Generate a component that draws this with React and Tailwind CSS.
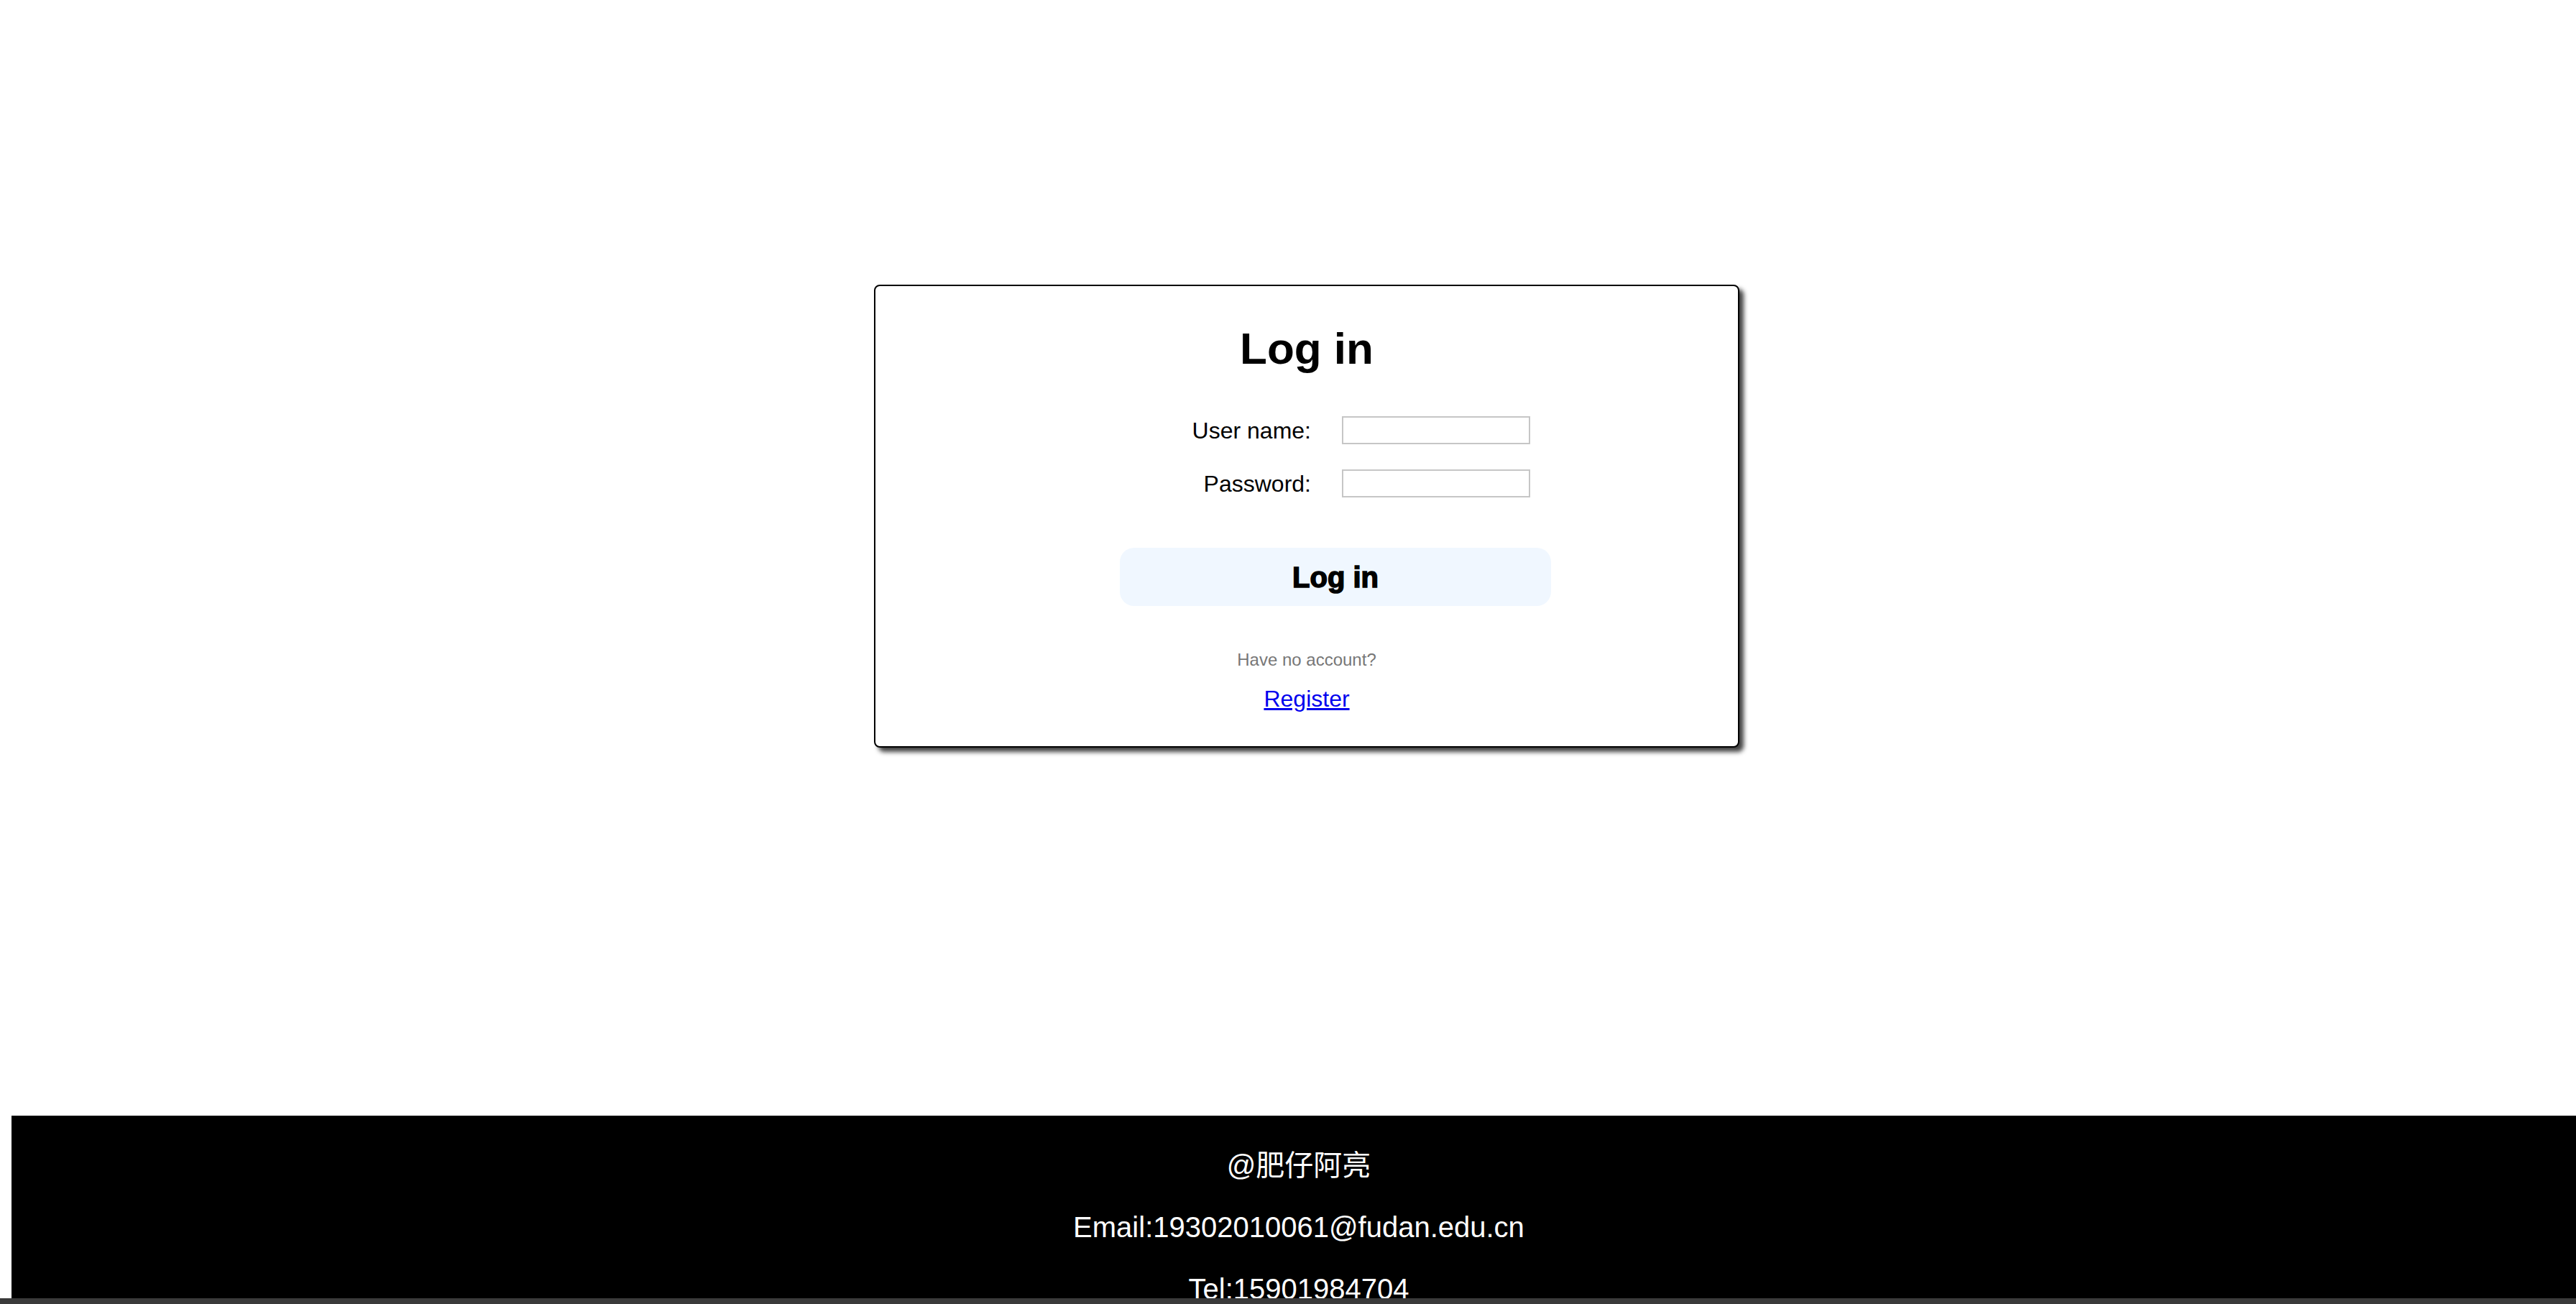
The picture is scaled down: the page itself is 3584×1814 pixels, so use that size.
import React, { useState } from 'react'

const font = { fontFamily: '"Liberation Sans", "Noto Sans CJK SC", Arial, sans-serif' }

const Field = ({ label, type, value, onChange }) => {
    return (
        <div className="flex items-center gap-[43px]">
            <label className="w-[170px] text-right text-[32px] leading-none text-black">
                {label}
            </label>
            <input
                type={type}
                value={value}
                onChange={(e) => onChange(e.target.value)}
                className="h-[39px] w-[262px] border-2 border-[#c6c6c6] bg-white px-1 text-[24px] outline-none"
            />
        </div>
    )
}

const App = () => {
    const [username, setUsername] = useState('')
    const [password, setPassword] = useState('')

    return (
        <div className="flex h-[1814px] w-full flex-col overflow-hidden bg-white" style={font}>
            {/* main area with the login card */}
            <div className="flex h-[1552px] justify-center pl-[52px] pt-[396px]">
                <div className="flex h-[644px] w-[1204px] flex-col rounded-[8px] border-2 border-black bg-white pt-[56px] shadow-[6px_6px_6px_rgba(0,0,0,0.75)]">
                    <h1 className="text-center text-[62px] font-bold leading-none text-black">
                        Log in
                    </h1>
                    <div className="ml-[436px] mt-[63px] flex flex-col gap-[35px]">
                        <Field label="User name:" type="text" value={username} onChange={setUsername} />
                        <Field label="Password:" type="password" value={password} onChange={setPassword} />
                    </div>
                    <button className="ml-[340px] mt-[70px] flex h-[81px] w-[600px] items-center justify-center rounded-[20px] bg-[#f0f7ff] text-[40px] font-black leading-none text-black [-webkit-text-stroke:1.5px_black]">
                        Log in
                    </button>
                    <p className="mt-[63px] text-center text-[24px] leading-none text-[#777777]">
                        Have no account?
                    </p>
                    <div className="mt-[26px] text-center">
                        <a href="#" className="text-[32px] leading-none text-[#0000ee] underline">
                            Register
                        </a>
                    </div>
                </div>
            </div>

            {/* footer */}
            <footer className="ml-[16px] flex h-[254px] flex-col items-center overflow-hidden bg-black pl-[14px] pt-[46px] text-[40px] leading-[46px] text-white">
                <p>@肥仔阿亮</p>
                <p className="mt-[40px]">Email:19302010061@fudan.edu.cn</p>
                <p className="mt-[40px]">Tel:15901984704</p>
            </footer>
            <div className="h-[8px] w-full bg-[#3a3a3a]" />
        </div>
    )
}

export default App
